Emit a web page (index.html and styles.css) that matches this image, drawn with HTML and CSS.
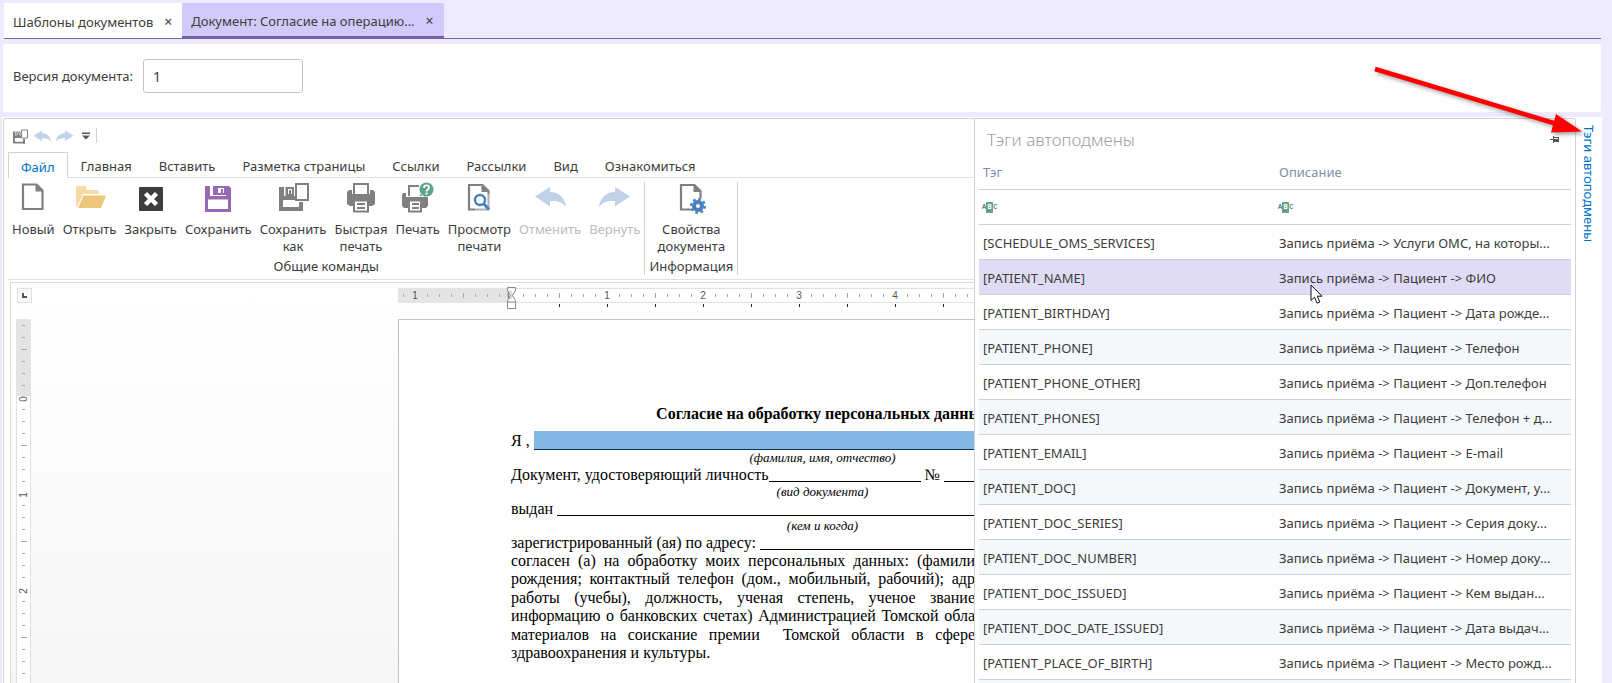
FILE: index.html
```html
<!DOCTYPE html>
<html lang="ru">
<head>
  <meta charset="UTF-8" />
  <meta name="viewport" content="width=device-width, initial-scale=1.0" />
  <title>Документ: Согласие на операцию</title>
  <link rel="stylesheet" href="styles.css">
</head>
<body>
  <nav class="tabs">
    <div class="tab">
      <a href="#">Шаблоны документов</a>
      <button class="tab-close" aria-label="Закрыть">×</button>
    </div>
    <div class="tab active">
      <a href="#">Документ: Согласие на операцию...</a>
      <button class="tab-close" aria-label="Закрыть">×</button>
    </div>
  </nav>

  <section class="version">
    <label for="version">Версия документа:</label>
    <input id="version" type="text" value="1">
  </section>

  <main class="workspace">
    <div class="editor">
      <div class="quick-bar">
        <button aria-label="Сохранить как">
          <svg width="16" height="16" viewBox="0 0 32 32"><use href="#i-saveas"/></svg>
        </button>
        <button aria-label="Отменить">
          <svg width="18" height="16" viewBox="0 4 32 26"><use href="#i-undo"/></svg>
        </button>
        <button aria-label="Вернуть">
          <svg width="18" height="16" viewBox="0 4 32 26"><use href="#i-redo"/></svg>
        </button>
        <button class="more" aria-label="Настройка панели">
          <svg width="8" height="8" viewBox="0 0 8 8"><path d="M0 .5h8v1.500H0zM0 3.500h8L4 7.500z" fill="#555"/></svg>
        </button>
      </div>

      <div class="ribbon-tabs">
        <button class="active">Файл</button>
        <button>Главная</button>
        <button>Вставить</button>
        <button>Разметка страницы</button>
        <button>Ссылки</button>
        <button>Рассылки</button>
        <button>Вид</button>
        <button>Ознакомиться</button>
      </div>

      <div class="ribbon">
        <div class="group">
          <div class="items">
            <button>
              <svg viewBox="0 0 32 32"><path d="M6 4h14l6 6v20H6z" fill="#fff"/><path d="M6 4.500h13.500l6 6v18.500H6z" fill="none" stroke="#808080" stroke-width="2.200"/><path d="M18.500 4l7.500 7.500h-7.500z" fill="#808080"/></svg>
              Новый
            </button>
            <button>
              <svg viewBox="0 0 32 32"><path d="M2 6h10v4h11l2 2v2H9L3 27H2z" fill="#f6d9a4"/><path d="M9.500 15.500H32L27 28H4z" fill="#eec57c"/></svg>
              Открыть
            </button>
            <button>
              <svg viewBox="0 0 32 32"><rect x="4" y="7" width="24" height="24" rx="1" fill="#3d3d3d"/><path d="M10.500 13.500l11 11M21.500 13.500l-11 11" stroke="#fff" stroke-width="4.500"/></svg>
              Закрыть
            </button>
            <button>
              <svg viewBox="0 0 32 32"><path d="M3 6h5v10h16V6h3l2 2v24H3z" fill="#966ab2"/><path d="M11 6h13v9H11z" fill="#966ab2"/><path d="M16 8h6v5h-6z" fill="#fff"/><path d="M19 9h2v4h-2z" fill="#966ab2"/><path d="M6 19.500h20v9.500H6z" fill="#fff"/><path d="M8.500 6h2v9h-2z" fill="#fff"/></svg>
              Сохранить
            </button>
            <button>
              <svg viewBox="0 0 32 32">
                <g id="i-saveas">
                  <path d="M2 7h5v9h11v4H7v7h18v-5h1v9H2z" fill="#808080"/>
                  <path d="M6 20h16v7H6z" fill="#fff"/>
                  <path d="M8.500 7H17v9H8.500z" fill="#808080"/>
                  <path d="M11 9h4v5h-4z" fill="#fff"/><path d="M12 10h2v4h-2z" fill="#808080"/>
                  <path d="M19 4h12v16H19z" fill="#fff" stroke="#808080" stroke-width="2"/>
                  <path d="M22 22h4v9h-4z" fill="#808080"/>
                </g>
              </svg>
              Сохранить<br>как
            </button>
            <button>
              <svg viewBox="0 0 32 32">
                <path d="M9 14V4h14v10" fill="#fff" stroke="#808080" stroke-width="2"/>
                <path d="M4 10h3v4h18v-4h3l2 2v12l-3 2H5l-3-2V12z" fill="#808080"/>
                <path d="M9 20.500h14v11H9z" fill="#fff" stroke="#808080" stroke-width="2"/>
                <path d="M12 24h8M12 28h8" stroke="#808080" stroke-width="2"/>
              </svg>
              Быстрая<br>печать
            </button>
            <button>
              <svg viewBox="0 0 32 32">
                <path d="M7 16V6h12v10" fill="#fff" stroke="#808080" stroke-width="2"/>
                <path d="M1 13h3v4h18v-1h3l1 2v8l-2 2H2l-2-2V15z" fill="#808080"/>
                <path d="M7 20.500h12v11H7z" fill="#fff" stroke="#808080" stroke-width="2"/>
                <path d="M10 24h7M10 28h7" stroke="#808080" stroke-width="2"/>
                <circle cx="24.500" cy="9" r="8" fill="#fff"/><circle cx="24.500" cy="9.500" r="7" fill="#5fa38d"/>
                <path d="M22 8c0-3.500 5-3.500 5-.5 0 2-2.500 2-2.500 4" fill="none" stroke="#fff" stroke-width="1.800"/><path d="M23.500 12.500h2v2h-2z" fill="#fff"/>
              </svg>
              Печать
            </button>
            <button>
              <svg viewBox="0 0 32 32"><path d="M6 5h13.500l6 6v18.500H6z" fill="#fff" stroke="#808080" stroke-width="2.200"/><path d="M18.500 4.500l7.500 7.500h-7.500z" fill="#808080"/><path d="M12 14h15v17H12z" fill="#fff" opacity=".4"/><circle cx="17" cy="20" r="5" fill="#fff" stroke="#4a80bd" stroke-width="2.400"/><path d="M20.500 23.500l5.500 6" stroke="#4a80bd" stroke-width="3"/></svg>
              Просмотр<br>печати
            </button>
            <button disabled>
              <svg viewBox="0 0 32 32"><path id="i-undo" d="M1 16.500L16 7v5c9 0 15 6 16 15-4-5-8-6.500-16-6v5.500z" fill="#bfd2e8"/></svg>
              Отменить
            </button>
            <button disabled>
              <svg viewBox="0 0 32 32"><path id="i-redo" d="M31 16.500L16 7v5C7 12 1 18 0 27c4-5 8-6.500 16-6v5.500z" fill="#bfd2e8"/></svg>
              Вернуть
            </button>
          </div>
          <div class="caption">Общие команды</div>
        </div>
        <div class="group">
          <div class="items">
            <button>
              <svg viewBox="0 0 32 32"><path d="M6 5h13.500l6 6v18.500H6z" fill="#fff" stroke="#808080" stroke-width="2.200"/><path d="M18.500 4.500l7.500 7.500h-7.500z" fill="#808080"/><circle cx="23" cy="26" r="8" fill="#fff"/><circle cx="23" cy="26" r="4" fill="none" stroke="#4a80bd" stroke-width="4"/><circle cx="23" cy="26" r="6.800" fill="none" stroke="#4a80bd" stroke-width="2.400" stroke-dasharray="2.670 2.670"/></svg>
              Свойства<br>документа
            </button>
          </div>
          <div class="caption">Информация</div>
        </div>
      </div>

      <div class="canvas">
        <div class="tab-stop"></div>
        <svg class="v-ruler" width="16" height="480">
          <defs>
            <pattern id="v-ticks" width="16" height="96" y="78" patternUnits="userSpaceOnUse">
              <path d="M6 12.500h3M6 24.500h3M6 36.500h3M5 48.500h6M6 60.500h3M6 72.500h3M6 84.500h3" stroke="#a8a8a8"/>
            </pattern>
          </defs>
          <rect x=".5" y=".5" width="14" height="479" fill="#fff" stroke="#e0e0e0"/>
          <rect width="15" height="77" fill="#e4e4e4"/>
          <rect width="16" height="480" fill="url(#v-ticks)"/>
          <g class="ruler-text" text-anchor="middle">
            <text transform="translate(11 80) rotate(-90)">0</text>
            <text transform="translate(11 176) rotate(-90)">1</text>
            <text transform="translate(11 272) rotate(-90)">2</text>
          </g>
        </svg>

        <div class="sheet">
          <svg class="h-ruler" width="794" height="24">
            <defs>
              <pattern id="h-ticks" width="96" height="24" x="113" patternUnits="userSpaceOnUse">
                <path d="M12.500 9v3M24.500 9v3M36.500 9v3M48.500 8v5M60.500 9v3M72.500 9v3M84.500 9v3" stroke="#a8a8a8"/>
              </pattern>
              <pattern id="stops" width="48" height="24" x="113" patternUnits="userSpaceOnUse">
                <path d="M.5 19v3" stroke="#222"/>
              </pattern>
            </defs>
            <rect x=".5" y="3.500" width="793" height="14" fill="#fff" stroke="#e0e0e0"/>
            <rect y="3" width="113" height="15" fill="#e4e4e4"/>
            <rect width="794" height="18" fill="url(#h-ticks)"/>
            <rect x="126" y="18" width="612" height="6" fill="url(#stops)"/>
            <g class="ruler-text" text-anchor="middle">
              <text x="17" y="14">1</text>
              <text x="112" y="14">0</text>
              <text x="209" y="14">1</text>
              <text x="305" y="14">2</text>
              <text x="401" y="14">3</text>
              <text x="497" y="14">4</text>
            </g>
            <path d="M109.500 2.500h8v3l-3 5 3 5v8h-8v-8l3-5-3-5zM109.500 17h8" fill="#fff" fill-opacity=".6" stroke="#888"/>
          </svg>

          <article class="page">
            <h1>Согласие на обработку персональных данных</h1>
            <p class="row">Я ,&nbsp;<span class="fill selected"></span></p>
            <p class="note">(фамилия, имя, отчество)</p>
            <p class="row">Документ, удостоверяющий личность<span class="fill short"></span>&nbsp;№&nbsp;<span class="fill"></span></p>
            <p class="note">(вид документа)</p>
            <p class="row">выдан&nbsp;<span class="fill"></span></p>
            <p class="note">(кем и когда)</p>
            <p class="row">зарегистрированный (ая) по адресу:&nbsp;<span class="fill"></span></p>
            <div class="consent">
              <p>согласен (а) на обработку моих персональных данных: (фамили</p>
              <p>рождения; контактный телефон (дом., мобильный, рабочий); адр</p>
              <p>работы (учебы), должность, ученая степень, ученое звание</p>
              <p>информацию о банковских счетах) Администрацией Томской обла</p>
              <p>материалов на соискание премии &nbsp;Томской области в сфере</p>
              <p>здравоохранения и культуры.</p>
            </div>
          </article>
        </div>
      </div>

      <aside class="tags">
        <header>
          <h2>Тэги автоподмены</h2>
          <button class="pin" aria-label="Закрепить">
            <svg width="9" height="8" viewBox="0 0 9 8"><path d="M0 3.500h3M3.500 0v7M3 1.500h6M8.500 1v5" stroke="#555"/><path d="M3 3h6v3H3z" fill="#555"/></svg>
          </button>
        </header>
        <table>
          <thead>
            <tr><th>Тэг</th><th>Описание</th></tr>
            <tr class="filter">
              <td><label><span class="abc">A<b>B</b>C</span><input type="text" aria-label="Фильтр по тэгу"></label></td>
              <td><label><span class="abc">A<b>B</b>C</span><input type="text" aria-label="Фильтр по описанию"></label></td>
            </tr>
          </thead>
          <tbody>
            <tr><td>[SCHEDULE_OMS_SERVICES]</td><td>Запись приёма -&gt; Услуги ОМС, на которы...</td></tr>
            <tr class="current"><td>[PATIENT_NAME]</td><td>Запись приёма -&gt; Пациент -&gt; ФИО
              <svg class="cursor" width="14" height="21" viewBox="0 0 14 21"><path d="M1 1v15.500l3.500-3.300 2.500 6 2.800-1.200-2.500-5.800H12z" fill="#fff" stroke="#111"/></svg>
            </td></tr>
            <tr><td>[PATIENT_BIRTHDAY]</td><td>Запись приёма -&gt; Пациент -&gt; Дата рожде...</td></tr>
            <tr><td>[PATIENT_PHONE]</td><td>Запись приёма -&gt; Пациент -&gt; Телефон</td></tr>
            <tr><td>[PATIENT_PHONE_OTHER]</td><td>Запись приёма -&gt; Пациент -&gt; Доп.телефон</td></tr>
            <tr><td>[PATIENT_PHONES]</td><td>Запись приёма -&gt; Пациент -&gt; Телефон + д...</td></tr>
            <tr><td>[PATIENT_EMAIL]</td><td>Запись приёма -&gt; Пациент -&gt; E-mail</td></tr>
            <tr><td>[PATIENT_DOC]</td><td>Запись приёма -&gt; Пациент -&gt; Документ, у...</td></tr>
            <tr><td>[PATIENT_DOC_SERIES]</td><td>Запись приёма -&gt; Пациент -&gt; Серия доку...</td></tr>
            <tr><td>[PATIENT_DOC_NUMBER]</td><td>Запись приёма -&gt; Пациент -&gt; Номер доку...</td></tr>
            <tr><td>[PATIENT_DOC_ISSUED]</td><td>Запись приёма -&gt; Пациент -&gt; Кем выдан...</td></tr>
            <tr><td>[PATIENT_DOC_DATE_ISSUED]</td><td>Запись приёма -&gt; Пациент -&gt; Дата выдач...</td></tr>
            <tr><td>[PATIENT_PLACE_OF_BIRTH]</td><td>Запись приёма -&gt; Пациент -&gt; Место рожд...</td></tr>
            <tr><td></td><td></td></tr>
          </tbody>
        </table>
      </aside>
    </div>

    <div class="side-bar">
      <button>Тэги автоподмены</button>
    </div>

    <svg class="arrow" width="216" height="76" viewBox="0 0 216 76">
      <path d="M0 2L182 57" stroke="#f00" stroke-width="4.500"/>
      <path d="M181 47l26 17.500-31 1z" fill="#f00"/>
    </svg>
  </main>
</body>
</html>
```

FILE: styles.css
```css
*, *::before, *::after {
  box-sizing: border-box;
  margin: 0;
  padding: 0;
}
body {
  font-family: 'Noto Sans', 'Open Sans', sans-serif;
  font-size: 13px;
  line-height: 18px;
  color: #3c3c3c;
  background: #eeebff;
  height: 100vh;
  display: flex;
  flex-direction: column;
  overflow: hidden;
}
button {
  font: inherit;
  color: inherit;
  background: none;
  border: none;
  cursor: pointer;
}

/* Вкладки документов */
.tabs {
  display: flex;
  margin: 3px 11px 0 4px;
  border-bottom: 1px solid #7562a9;
}
.tab {
  display: flex;
  align-items: center;
  gap: 11px;
  height: 35px;
  padding: 2px 10px 0 9px;
  background: #fff;
}
.tab.active {
  background: #d2cafa;
  border-bottom: 2px solid #7562a9;
}
.tab a {
  color: inherit;
  text-decoration: none;
}
.tab-close {
  width: 8px;
  font-size: 14px;
}

/* Версия */
.version {
  display: flex;
  align-items: center;
  gap: 10px;
  height: 68px;
  margin: 5px 11px 5px 3px;
  padding: 0 10px 4px;
  background: #fff;
  border-radius: 3px;
}
.version input {
  width: 160px;
  height: 34px;
  padding: 0 9px;
  font: inherit;
  font-size: 14px;
  color: inherit;
  border: 1px solid #c4c4c4;
  border-radius: 3px;
}

/* Рабочая область */
.workspace {
  position: relative;
  flex: 1;
  min-height: 0;
  display: flex;
  margin: 0 10px 0 2px;
  background: #fff;
}
.editor {
  position: relative;
  flex: 1;
  min-width: 0;
  display: flex;
  flex-direction: column;
  margin: 1px 0 0 1px;
  border: 1px solid #d2d2d2;
  border-bottom: none;
  border-radius: 3px 3px 0 0;
  overflow: hidden;
}
.quick-bar {
  display: flex;
  align-items: center;
  gap: 5px;
  height: 33px;
  padding: 0 8px;
}
.quick-bar button {
  display: flex;
}
.quick-bar .more {
  height: 15px;
  align-items: center;
  padding: 0 6px 0 3px;
  border-right: 1px solid #d2d2d2;
}

/* Лента */
.ribbon-tabs {
  display: flex;
  margin-left: 4px;
  border-bottom: 1px solid #e0e0e0;
}
.ribbon-tabs button {
  height: 25px;
  padding: 3px 14px 0 13px;
}
.ribbon-tabs .active {
  height: 26px;
  margin-bottom: -1px;
  padding: 2px 12px 0;
  color: #0072c6;
  background: #fff;
  border: 1px solid #d2d2d2;
  border-bottom: none;
}
.ribbon {
  display: flex;
  height: 102px;
  margin-left: 4px;
  padding-top: 4px;
  border-bottom: 1px solid #e0e0e0;
}
.group {
  display: flex;
  flex-direction: column;
  height: 93px;
  border-right: 1px solid #d2d2d2;
}
.items {
  display: flex;
  justify-content: center;
  height: 78px;
}
.items button {
  display: flex;
  flex-direction: column;
  align-items: center;
  padding: 0 4px;
  line-height: 17px;
}
.items button:disabled {
  color: #bcbcbc;
}
.items svg {
  width: 32px;
  height: 32px;
  margin: -2px 0 9px;
  overflow: visible;
}
.caption {
  padding: 0 4px;
  text-align: center;
}

/* Холст документа */
.canvas {
  position: relative;
  flex: 1;
  min-height: 0;
  display: flex;
  gap: 5px;
  margin: 2px 0 0 6px;
  padding-left: 5px;
  border: 1px solid #dcdcdc;
  border-bottom: none;
  background: linear-gradient(#fff, #f6f6f6);
  overflow: hidden;
}
.tab-stop {
  position: absolute;
  top: 5px;
  left: 6px;
  width: 15px;
  height: 15px;
  border: 1px solid #e0e0e0;
  background: #fafafa;
}
.tab-stop::before {
  content: '';
  position: absolute;
  top: 4px;
  left: 4px;
  width: 5px;
  height: 5px;
  border: solid #555;
  border-width: 0 0 2px 2px;
}
.v-ruler {
  flex: none;
  margin-top: 36px;
}
.ruler-text {
  font-family: 'Liberation Sans', sans-serif;
  font-size: 10px;
  fill: #555;
}
.sheet {
  flex: 1;
  display: flex;
  flex-direction: column;
  align-items: center;
  padding: 2px 21px 0 0;
}
.h-ruler {
  flex: none;
}
.page {
  flex: 1;
  width: 794px;
  margin-top: 10px;
  padding: 84px 57px 0 112px;
  font-family: 'Liberation Serif', serif;
  font-size: 16px;
  line-height: 19px;
  color: #000;
  background: #fff;
  border: 1px solid #c4c4c4;
  border-bottom: none;
}
.page h1 {
  margin-bottom: 8px;
  font-size: 16px;
  text-align: center;
}
.row {
  display: flex;
  white-space: nowrap;
}
.fill {
  flex: 1;
  height: 17px;
  border-bottom: 1px solid #000;
}
.fill.short {
  flex: none;
  width: 152px;
}
.fill.selected {
  height: 19px;
  background: #82b7e6;
  border-bottom-color: #0a3050;
}
.note {
  font-size: 13px;
  font-style: italic;
  line-height: 15px;
  text-align: center;
}
.consent {
  width: 464px;
  line-height: 1.15;
  white-space: nowrap;
}
.consent p {
  text-align-last: justify;
}
.consent p:last-child {
  text-align-last: left;
}

/* Панель тэгов */
.tags {
  position: absolute;
  top: 0;
  right: 0;
  bottom: 0;
  width: 601px;
  padding: 0 4px;
  background: #fff;
  border-left: 1px solid #d2d2d2;
  overflow: hidden;
}
.tags header {
  display: flex;
  align-items: center;
  justify-content: space-between;
  height: 35px;
  padding: 6px 12px 0 8px;
}
.tags h2 {
  font-size: 17px;
  font-weight: 300;
  color: #a0a0a0;
}
.pin {
  display: flex;
}
.tags table {
  width: 100%;
  table-layout: fixed;
  border-collapse: collapse;
}
.tags th, .tags td {
  height: 35px;
  padding: 2px 4px 0;
  font-weight: 400;
  text-align: left;
  white-space: nowrap;
  border-bottom: 1px solid #d2d2d2;
}
.tags th {
  color: #7f8ea8;
}
.tags tbody tr:nth-child(even) {
  background: #f4f8fb;
}
.tags tbody tr.current:nth-child(n) {
  background: #e1dcf6;
}
.current td {
  position: relative;
}
.filter label {
  display: flex;
  align-items: center;
}
.tags .filter td {
  padding-left: 3px;
}
.filter input {
  flex: 1;
  min-width: 0;
  border: none;
  outline: none;
  background: none;
}
.abc {
  display: flex;
  align-items: center;
  font-family: 'Liberation Mono', monospace;
  font-size: 7px;
  line-height: 11px;
}
.abc b {
  width: 7px;
  color: #fff;
  text-align: center;
  background: #5fa38d;
  border-radius: 1px;
}
.cursor {
  position: absolute;
  top: 24px;
  left: 35px;
  z-index: 1;
}

/* Боковая вкладка */
.side-bar {
  width: 26px;
  padding-top: 8px;
}
.side-bar button {
  padding: 0 4px;
  writing-mode: vertical-rl;
  color: #0072c6;
}
.arrow {
  position: absolute;
  top: -50px;
  right: 11px;
  overflow: visible;
  filter: drop-shadow(2px 2px 2px rgba(0, 0, 0, 0.4));
}
```
